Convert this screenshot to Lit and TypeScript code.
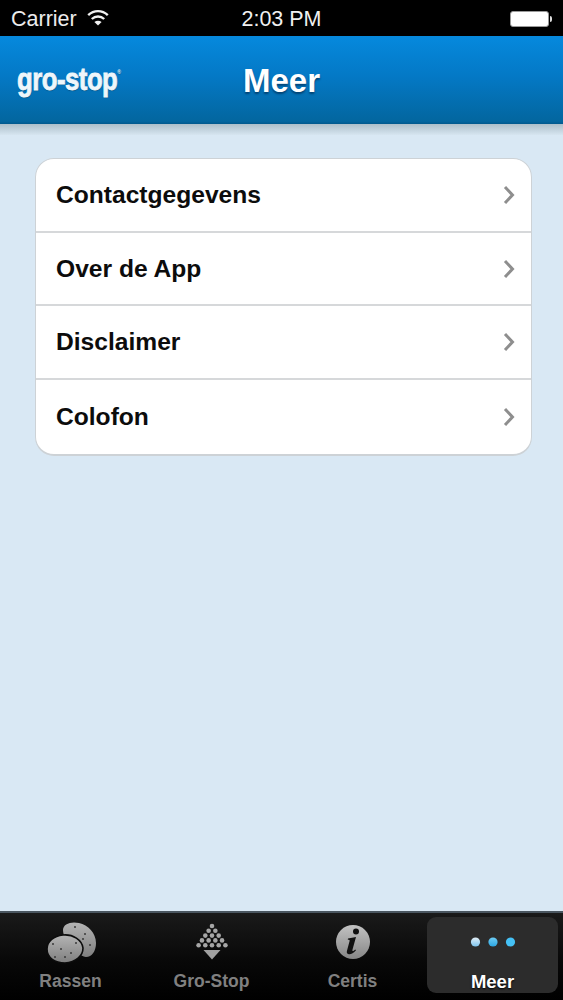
import { LitElement, html, css, svg } from "lit";
import { customElement } from "lit/decorators.js";

const rows = ["Contactgegevens", "Over de App", "Disclaimer", "Colofon"];

const potato = html`<svg class="ic" width="60" height="44" viewBox="0 0 60 44" aria-hidden="true">
  <defs>
    <linearGradient id="pg" x1="0" y1="0" x2="0" y2="1"><stop offset="0" stop-color="#b4b4b4"/><stop offset="1" stop-color="#7f7f7f"/></linearGradient>
  </defs>
  <path d="M22 9C22 3 30 0 38 2c9 2 17 10 17 20 0 8-4 14-10 14-6 0-23-15-23-27z" fill="url(#pg)"/>
  <path d="M6 28C6 20 13 15 22 14c10-1 19 5 20 13 0 8-7 14-18 15C14 42 6 37 6 28z" fill="url(#pg)" stroke="#0c0c0c" stroke-width="1.600"/>
  ${[[20,28],[12,23],[30,32],[35,22],[14,36],[24,36],[34,6],[44,13],[49,24],[42,18]].map(([x,y]) => svg`<circle cx=${x} cy=${y} r="1" fill="#3a3a3a"/>`)}
</svg>`;

const pile = [[0,0],[-1,1],[1,1],[-2,2],[0,2],[2,2],[-3,3],[-1,3],[1,3],[3,3],[-4,4],[-2,4],[0,4],[2,4],[4,4]];
const groStop = html`<svg class="ic" width="60" height="44" viewBox="0 0 60 44" aria-hidden="true">
  ${pile.map(([c,r]) => svg`<circle cx=${30 + c * 3.350} cy=${5 + r * 4.800} r="2.300" fill="#a6a6a6"/>`)}
  <path d="M21.500 29h17l-8.500 9.500z" fill="#a0a0a0"/>
</svg>`;

const info = html`<svg class="ic" width="60" height="44" viewBox="0 0 60 44" aria-hidden="true">
  <defs>
    <linearGradient id="ig" x1="0" y1="0" x2="0" y2="1"><stop offset="0" stop-color="#c2c2c2"/><stop offset="1" stop-color="#868686"/></linearGradient>
  </defs>
  <circle cx="30" cy="21" r="17" fill="url(#ig)"/>
  <circle cx="33" cy="10.500" r="3" fill="#111"/>
  <path d="M25 17.500l8-1.500-3.600 13c-.3 1.200.6 1.600 2.800-.5l.8.8c-2.400 3.200-5 4.200-7.200 4-2-.2-2.300-1.700-1.800-3.500l2.600-9.800c.2-1-.3-1.300-1.800-1.200z" fill="#111"/>
</svg>`;

const dots = html`<svg class="ic" width="60" height="44" viewBox="0 0 60 44" aria-hidden="true">
  <defs>
    <linearGradient id="d1" x1="0" y1="0" x2="0" y2="1"><stop offset="0" stop-color="#e4eff6"/><stop offset="1" stop-color="#7cc4ee"/></linearGradient>
    <linearGradient id="d2" x1="0" y1="0" x2="0" y2="1"><stop offset="0" stop-color="#6fcdf5"/><stop offset="1" stop-color="#2ba6e2"/></linearGradient>
  </defs>
  <circle cx="12.500" cy="21" r="4.600" fill="url(#d1)"/>
  <circle cx="30" cy="21" r="4.600" fill="url(#d2)"/>
  <circle cx="47.500" cy="21" r="4.600" fill="#45c1f5"/>
</svg>`;

@customElement("app-root")
export class AppRoot extends LitElement {
  static styles = css`
    :host { display: flex; flex-direction: column; width: 563px; height: 1000px; overflow: hidden;
      font-family: "Liberation Sans", Arial, sans-serif; background: #d9e8f4; }
    .status { height: 36px; flex: none; background: #000; color: #ececec; display: grid;
      grid-template-columns: 1fr auto 1fr; align-items: center; padding: 2px 11px 0; font-size: 21.500px; box-sizing: border-box; }
    .status-left { display: flex; align-items: center; gap: 10px; }
    .status-left svg { margin-top: -3px; }
    .time { color: #f0f0f0; }
    .battery { justify-self: end; display: flex; align-items: center; gap: 1px; margin-top: -1px; }
    .batt-body { width: 37px; height: 14px; border-radius: 3px; background: #fff; border: 1px solid #9a9a9a; }
    .batt-tip { width: 2px; height: 6px; background: #ddd; border-radius: 0 2px 2px 0; }
    .nav { height: 88px; flex: none; display: grid; grid-template-columns: 1fr auto 1fr; align-items: center;
      background: linear-gradient(#0689dd, #0479c6 45%, #03669f 97%, #02588d); padding: 0 17px; box-sizing: border-box; }
    .logo { font-weight: 700; font-size: 31px; color: #eef6fb; display: inline-block; transform: scaleX(.83);
      transform-origin: left center; letter-spacing: -.6px; -webkit-text-stroke: .8px #eef6fb;
      text-shadow: 0 1px 1px rgba(0,0,0,.35); margin-top: -1px; white-space: nowrap; }
    .logo sup { font-size: 6px; vertical-align: 16px; line-height: 0; -webkit-text-stroke: 0; }
    .title { font-weight: 700; font-size: 33px; color: #fff; text-shadow: 0 2px 2px rgba(0,30,60,.55); margin-top: 2px; }
    .shade { height: 11px; flex: none; background: linear-gradient(#aebfca, #d6e5f0); }
    .content { flex: 1; padding: 23px 31px 0 35px; }
    .list { background: #fff; border: 1px solid #cdd2d6; border-bottom-width: 2px; border-radius: 19px; overflow: hidden; }
    .row { height: 73.700px; box-sizing: border-box; display: flex; align-items: center; justify-content: space-between; padding: 0 16px 0 20px;
      font-weight: 700; font-size: 24.600px; color: #0c0c0c; border-bottom: 2px solid #d6d8da; }
    .row:last-child { border-bottom: 0; }
    .tabbar { height: 89px; flex: none; border-top: 2px solid #4a5660; box-sizing: border-box; display: grid;
      grid-template-columns: repeat(4, 141px); background: linear-gradient(#1a1a1a, #080808 55%, #000);
      padding: 4px 0 7px; }
    .tab { display: flex; flex-direction: column; align-items: center; gap: 6px; padding-top: 4px; color: #808080;
      font-weight: 700; font-size: 17.500px; border-radius: 9px; }
    .tab.on { background: #2c2c2c; color: #fff; text-shadow: 0 1px 2px #000; margin: 0 6px 0 4px; font-size: 18.500px; }
    .ic { display: block; }
  `;

  render() {
    return html`
      <div class="status">
        <div class="status-left"><span>Carrier</span>
          <svg width="22" height="17" viewBox="0 0 22 17" fill="none" stroke="#f0f0f0" stroke-width="2.400" aria-hidden="true">
            <path d="M1.200 6.200c5.700-5.400 13.900-5.400 19.600 0"/><path d="M4.800 10c3.600-3.400 8.800-3.400 12.400 0"/>
            <path d="M11 16.500l-3.600-3.400c2.200-1.700 5-1.700 7.200 0z" fill="#f0f0f0" stroke="none"/>
          </svg>
        </div>
        <div class="time">2:03 PM</div>
        <div class="battery"><div class="batt-body"></div><div class="batt-tip"></div></div>
      </div>
      <div class="nav">
        <div><span class="logo">gro-stop<sup>®</sup></span></div>
        <div class="title">Meer</div>
        <div></div>
      </div>
      <div class="shade"></div>
      <div class="content">
        <div class="list">
          ${rows.map((r) => html`<div class="row"><span>${r}</span>
            <svg width="12" height="20" viewBox="0 0 12 20" fill="none" stroke="#8e8e8e" stroke-width="3" aria-hidden="true"><path d="M2 2l7.500 8L2 18"/></svg>
          </div>`)}
        </div>
      </div>
      <div class="tabbar">
        <div class="tab">${potato}<span>Rassen</span></div>
        <div class="tab">${groStop}<span>Gro-Stop</span></div>
        <div class="tab">${info}<span>Certis</span></div>
        <div class="tab on">${dots}<span>Meer</span></div>
      </div>
    `;
  }
}
